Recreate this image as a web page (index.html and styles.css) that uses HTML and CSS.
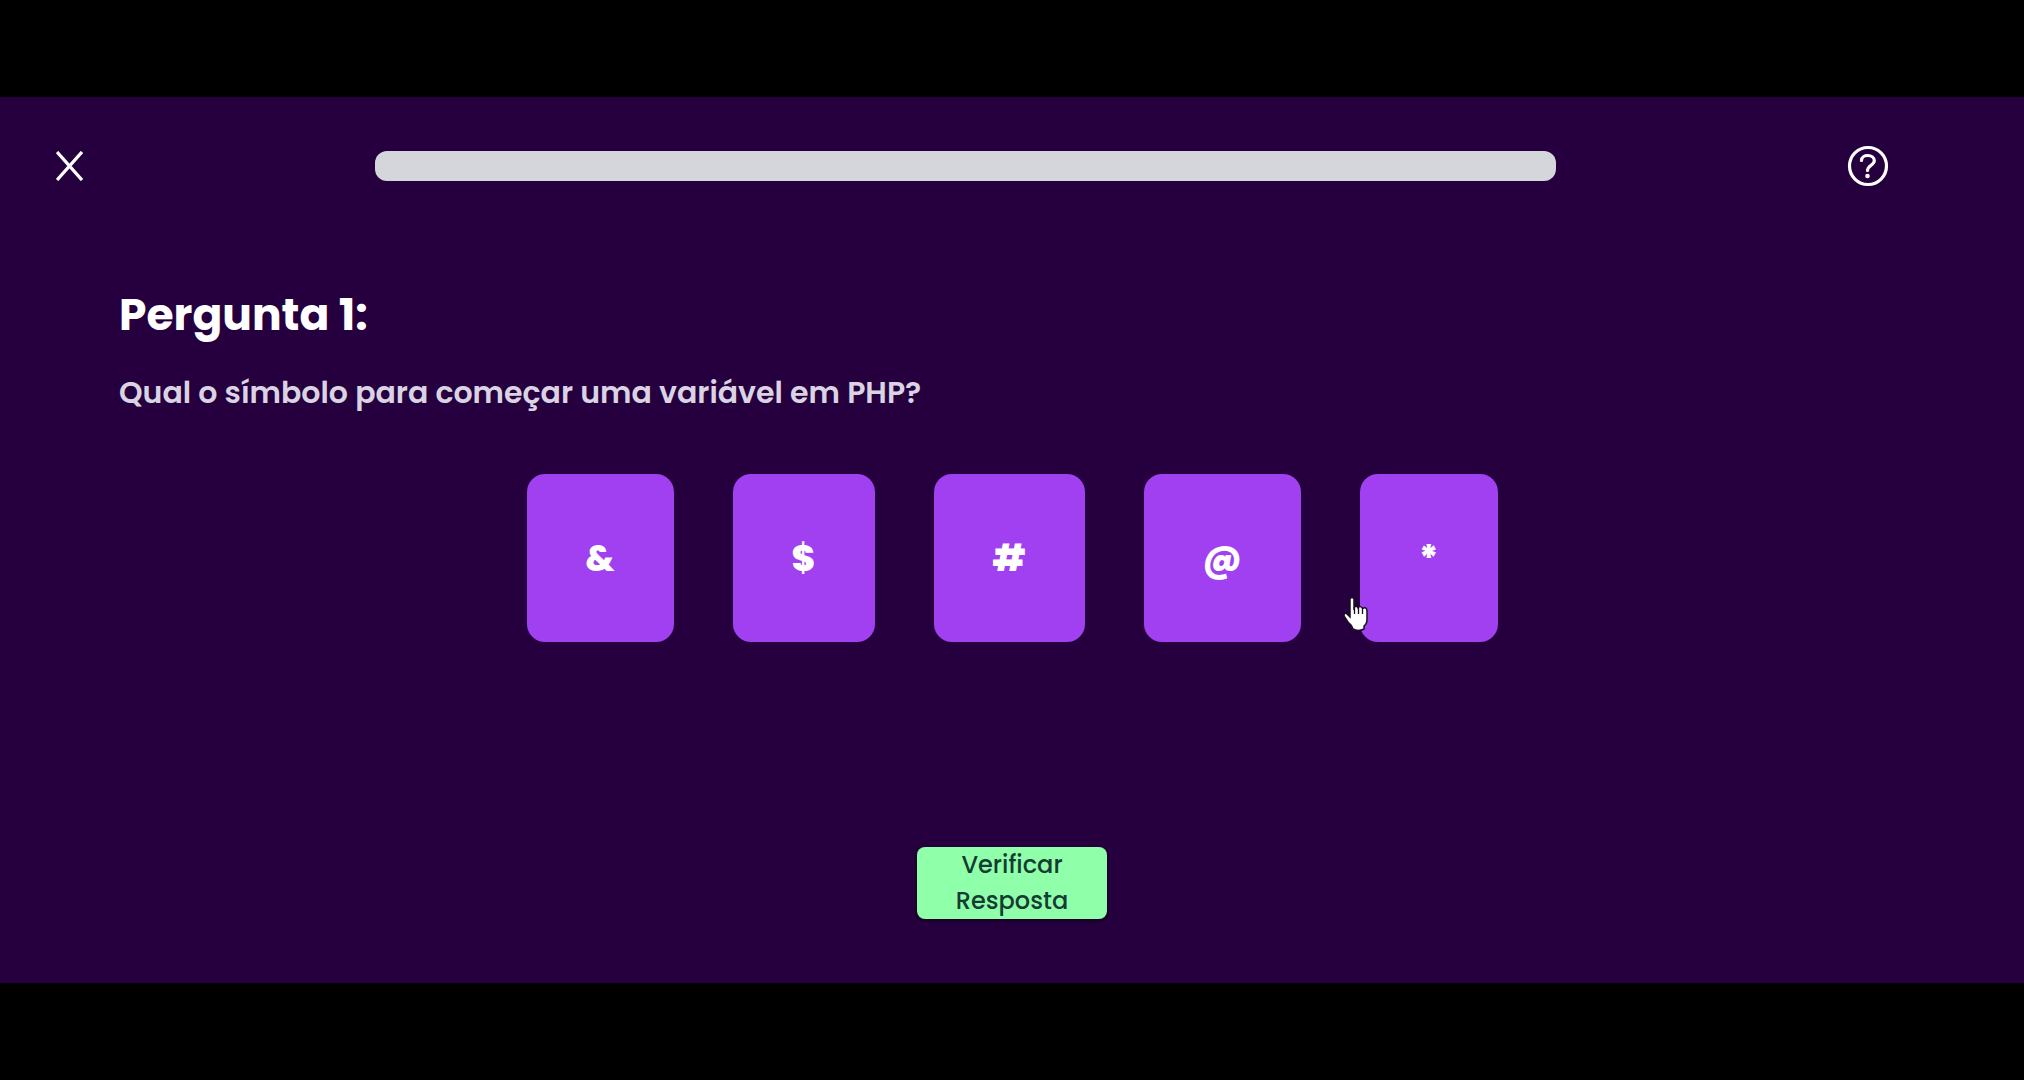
FILE: index.html
```html
<!DOCTYPE html>
<html lang="pt-BR">
<head>
  <meta charset="utf-8">
  <meta name="viewport" content="width=device-width, initial-scale=1">
  <title>Pergunta 1</title>
  <link rel="stylesheet" href="styles.css">
</head>
<body>
  <div class="quiz">
    <header class="topbar">
      <button class="icon-button" type="button" aria-label="Fechar">
        <svg width="28" height="30" viewBox="0 0 28 30" fill="none" stroke="currentColor" stroke-width="3.300" stroke-linecap="butt">
          <path d="M1 1 26 29M26 1 1 29"/>
        </svg>
      </button>
      <div class="progress" role="progressbar" aria-label="Progresso" aria-valuemin="0" aria-valuemax="100" aria-valuenow="0"></div>
      <button class="icon-button" type="button" aria-label="Ajuda">
        <svg width="42" height="42" viewBox="0 0 42 42" fill="none" stroke="currentColor" stroke-width="3.200" stroke-linecap="round" stroke-linejoin="round">
          <circle cx="21" cy="21" r="18.500"/>
          <path d="M14.5 15.5C14.5 12 17.5 10.500 20.800 10.500C24.500 10.500 27.300 12.500 27.300 15.800C27.300 20 20.500 20.500 20.500 25.500"/>
          <circle cx="20.500" cy="31" r="2.300" fill="currentColor" stroke="none"/>
        </svg>
      </button>
    </header>
    <main class="question">
      <h1 class="question-title">Pergunta 1:</h1>
      <p class="question-text">Qual o símbolo para começar uma variável em PHP?</p>
      <div class="options">
        <button class="option option-ampersand" type="button">&amp;</button>
        <button class="option option-dollar" type="button">$</button>
        <button class="option option-hash" type="button">#</button>
        <button class="option option-at" type="button">@</button>
        <div class="option-hovered">
          <button class="option option-asterisk" type="button">*</button>
          <svg class="pointer" width="28" height="36" viewBox="0 0 28 36" aria-hidden="true">
            <path d="M8 3Q10 0 12 3V12Q14 8.500 16 12Q18.500 9 20.500 12.500Q24.500 10 25 15V23Q25 28 22 30V33Q16 36 11 33Q10 29 6 26L2 20Q2 16 5 18L8 21Z" fill="#fff" stroke="#17101f" stroke-width="1.500"/>
            <path d="M12.500 11V18M16.500 12V18M20.500 13V18" stroke="#17101f" stroke-width="1.300"/>
          </svg>
        </div>
      </div>
    </main>
    <footer class="actions">
      <button class="verify" type="button">Verificar Resposta</button>
    </footer>
  </div>
</body>
</html>
```
FILE: styles.css
```css
* {
  box-sizing: border-box;
}

body {
  margin: 0;
  min-height: 100vh;
  padding: 97px 0;
  display: flex;
  flex-direction: column;
  background: #000;
  color: #fff;
  font-family: Poppins, Inter, sans-serif;
}

button {
  border: 0;
  font-family: inherit;
  cursor: pointer;
}

.quiz {
  flex: 1;
  display: flex;
  flex-direction: column;
  background: #26003e;
}

.topbar {
  display: flex;
  align-items: center;
  justify-content: space-between;
  padding: 48px 135px 0 56px;
}

.icon-button {
  display: flex;
  padding: 0;
  background: none;
  color: #fff;
}

.progress {
  width: 64.4%;
  height: 30px;
  border-radius: 12px;
  background: #d5d5dc;
}

.question {
  flex: 1;
  padding: 96px 119px 0;
}

.question-title {
  margin: 0;
  font-size: 44px;
  line-height: 64px;
  font-weight: 700;
}

.question-text {
  margin: 24px 0 59px;
  color: #d9d3e3;
  font-size: 30px;
  line-height: 44px;
  font-weight: 600;
}

.options {
  display: flex;
  justify-content: center;
  gap: 59px;
}

.option {
  height: 168px;
  padding: 0;
  border-radius: 18px;
  background: #a040f0;
  color: #fff;
  font-size: 36px;
  font-weight: 800;
}

.option-ampersand {
  width: 147px;
}

.option-dollar {
  width: 142px;
}

.option-hash {
  width: 151px;
}

.option-at {
  width: 157px;
}

.option-asterisk {
  width: 138px;
}

.option-hovered {
  position: relative;
}

.pointer {
  position: absolute;
  top: 122px;
  left: -18px;
}

.actions {
  display: flex;
  justify-content: center;
  padding-bottom: 64px;
}

.verify {
  width: 190px;
  padding: 0 24px;
  border-radius: 8px;
  background: #8fffaa;
  box-shadow: 0 2px 4px #0008;
  color: #143c32;
  font-size: 24px;
  line-height: 36px;
  font-weight: 500;
}
```
